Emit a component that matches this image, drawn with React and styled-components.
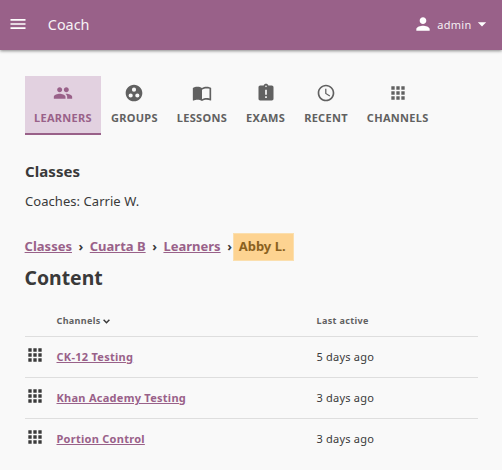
import React from "react";
import styled, { createGlobalStyle } from "styled-components";
import {
  MdMenu,
  MdPerson,
  MdArrowDropDown,
  MdPeople,
  MdGroupWork,
  MdAssignmentLate,
  MdAccessTime,
  MdApps,
} from "react-icons/md";

const GlobalStyle = createGlobalStyle`
  * { box-sizing: border-box; }
  body {
    margin: 0;
    background: #f9f9f9;
    color: #3a3a3a;
    font-family: "Noto Sans", sans-serif;
    font-size: 13px;
  }
`;

const AppBar = styled.header`
  display: flex;
  align-items: center;
  height: 50px;
  padding: 0 10.5px 2px 8px;
  background: #996189;
  color: #fff;
  box-shadow: 0 1px 3px rgba(0, 0, 0, 0.45);
`;

const AppTitle = styled.div`
  flex: 1;
  margin: 1px 0 0 19.8px;
  font-size: 14.4px;
  line-height: 20px;
  opacity: 0.92;
`;

const UserMenu = styled.div`
  display: flex;
  align-items: center;
  font-size: 11px;
  letter-spacing: 0.27px;
  line-height: 20px;

  span {
    margin: 2px 0 0 4.5px;
    opacity: 0.9;
  }
`;

const Page = styled.main`
  padding: 26px 24px 0 25px;
`;

const Tabs = styled.nav`
  display: flex;
  gap: 1px;
`;

const Tab = styled.a`
  display: flex;
  flex-direction: column;
  align-items: center;
  height: 59px;
  padding: 7px 9px 0;
  border-bottom: 2px solid ${(p) => (p.$active ? "#996189" : "transparent")};
  background: ${(p) => (p.$active ? "#e2d1e0" : "transparent")};
  color: ${(p) => (p.$active ? "#996189" : "#616161")};
  font-size: 11px;
  letter-spacing: 0.3px;
  font-weight: 700;
  line-height: 16px;

  svg {
    margin-bottom: 7px;
  }
`;

const SectionTitle = styled.h2`
  margin: 26px 0 0;
  font-size: 15px;
  letter-spacing: 0.08px;
  line-height: 21px;
`;

const Coaches = styled.p`
  margin: 10px 0 0;
  font-size: 13px;
  letter-spacing: 0.05px;
  line-height: 18px;
`;

const Crumbs = styled.div`
  display: flex;
  align-items: center;
  height: 28px;
  margin: 23px 0 0 -0.4px;
  font-size: 13px;
  font-weight: 700;
  line-height: 18px;

  > a,
  > i {
    margin-bottom: 2px;
  }
`;

const Link = styled.a`
  color: #996189;
  text-decoration: underline;
`;

const Separator = styled.i`
  width: 17.8px;
  font-style: normal;
  text-align: center;
`;

const CurrentCrumb = styled.span`
  height: 28px;
  width: 61px;
  margin-left: -5px;
  padding: 3px 0 0 4.3px;
  border: 1px solid #fbdfae;
  background: #fdd391;
  color: #8a6120;
`;

const ContentTitle = styled.h1`
  margin: 3px 0 0 -0.5px;
  font-size: 19.4px;
  line-height: 27px;
`;

const Table = styled.div`
  margin-top: 16px;
`;

const TableRow = styled.div`
  display: grid;
  grid-template-columns: 31.5px 260px 1fr;
  align-items: center;
  height: 41px;
  border-bottom: 1px solid ${(p) => (p.$last ? "transparent" : "#dedede")};
  font-size: 11px;
  letter-spacing: 0.22px;
  line-height: 16px;

  a {
    font-weight: 700;
    letter-spacing: 0.27px;
  }

  > svg {
    margin: 0 0 4px -0.5px;
  }
`;

const HeaderRow = styled(TableRow)`
  height: 30px;
  padding-bottom: 1px;
  color: #616161;
  font-size: 9px;
  letter-spacing: 0.36px;
  font-weight: 700;
`;

const SortHeader = styled.span`
  display: flex;
  align-items: center;
  gap: 2.8px;
`;

const BookIcon = () => (
  <svg width="20" height="20" viewBox="0 0 24 24" fill="currentColor">
    <path d="M21 5c-1.11-.35-2.33-.5-3.5-.5-1.95 0-4.05.4-5.5 1.5-1.45-1.1-3.55-1.5-5.5-1.5S2.45 4.9 1 6v14.65c0 .25.25.5.5.5.1 0 .15-.05.25-.05C3.1 20.45 5.05 20 6.5 20c1.95 0 4.05.4 5.5 1.5 1.35-.85 3.8-1.5 5.5-1.5 1.65 0 3.35.3 4.75 1.05.1.05.15.05.25.05.25 0 .5-.25.5-.5V6c-.6-.45-1.25-.75-2-1zm0 13.5c-1.1-.35-2.3-.5-3.5-.5-1.7 0-4.15.65-5.5 1.5V8c1.35-.85 3.8-1.5 5.5-1.5 1.2 0 2.4.15 3.5.5v11.5z" />
  </svg>
);

const SortArrow = () => (
  <svg width="7" height="5" viewBox="0 0 7 5" fill="none" stroke="#3a3a3a" strokeWidth="1.5">
    <path d="M0.6 0.8 3.5 3.7 6.4 0.8" />
  </svg>
);

const tabs = [
  { label: "LEARNERS", Icon: MdPeople, active: true },
  { label: "GROUPS", Icon: MdGroupWork },
  { label: "LESSONS", Icon: BookIcon },
  { label: "EXAMS", Icon: MdAssignmentLate },
  { label: "RECENT", Icon: MdAccessTime },
  { label: "CHANNELS", Icon: MdApps },
];

const crumbs = ["Classes", "Cuarta B", "Learners"];

const channels = [
  ["CK-12 Testing", "5 days ago"],
  ["Khan Academy Testing", "3 days ago"],
  ["Portion Control", "3 days ago"],
];

export default function App() {
  return (
    <>
      <GlobalStyle />
      <AppBar>
        <MdMenu size={20} />
        <AppTitle>Coach</AppTitle>
        <UserMenu>
          <MdPerson size={20} />
          <span>admin</span>
          <MdArrowDropDown size={20} />
        </UserMenu>
      </AppBar>
      <Page>
        <Tabs>
          {tabs.map(({ label, Icon, active }) => (
            <Tab key={label} $active={active}>
              <Icon size={20} />
              {label}
            </Tab>
          ))}
        </Tabs>
        <SectionTitle>Classes</SectionTitle>
        <Coaches>Coaches: Carrie W.</Coaches>
        <Crumbs>
          {crumbs.map((name) => (
            <React.Fragment key={name}>
              <Link>{name}</Link>
              <Separator>›</Separator>
            </React.Fragment>
          ))}
          <CurrentCrumb>Abby L.</CurrentCrumb>
        </Crumbs>
        <ContentTitle>Content</ContentTitle>
        <Table>
          <HeaderRow>
            <span />
            <SortHeader>
              Channels
              <SortArrow />
            </SortHeader>
            <span>Last active</span>
          </HeaderRow>
          {channels.map(([name, seen], i) => (
            <TableRow key={name} $last={i === channels.length - 1}>
              <MdApps size={20} />
              <span>
                <Link>{name}</Link>
              </span>
              <span>{seen}</span>
            </TableRow>
          ))}
        </Table>
      </Page>
    </>
  );
}
